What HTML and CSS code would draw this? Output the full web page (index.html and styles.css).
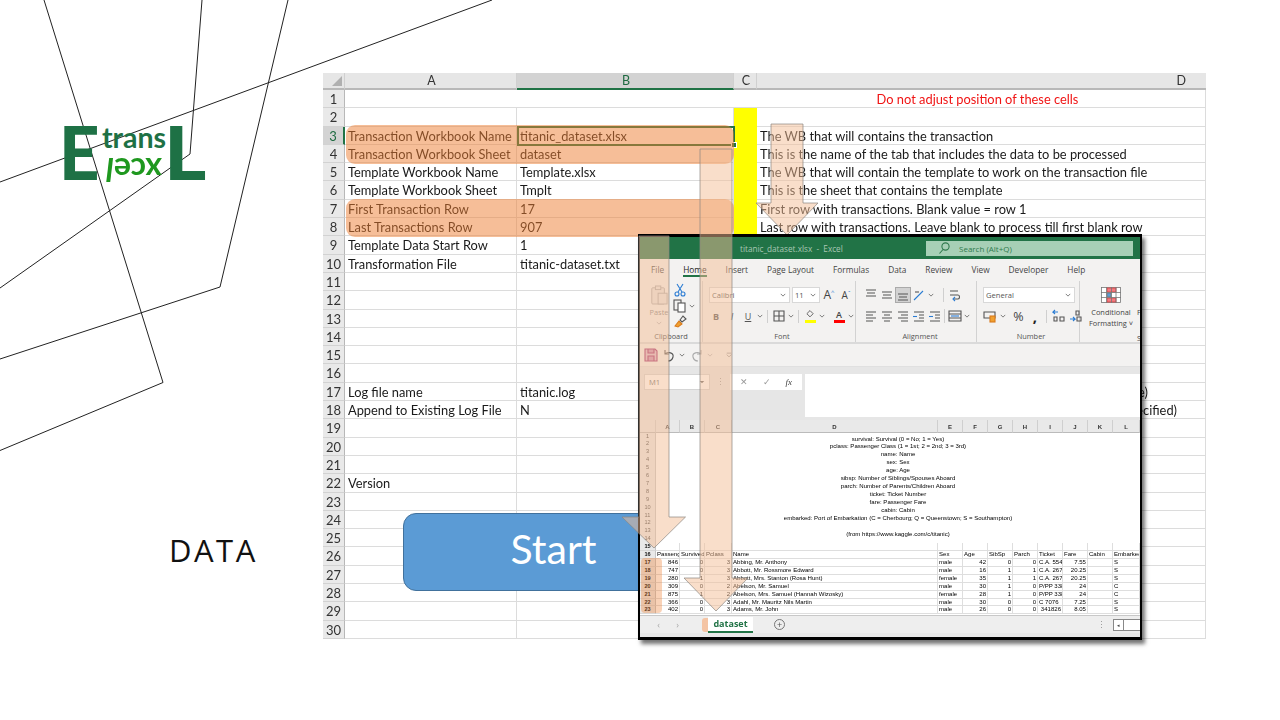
FILE: index.html
```html
<!DOCTYPE html>
<html lang="en">
<head>
<meta charset="utf-8">
<title>ETransL data</title>
<link rel="stylesheet" href="styles.css">
</head>
<body>
<div class="slide">
  <svg class="lines" viewBox="0 0 1280 720">
    <path d="M44 0L163 382.5L0 450.5"/>
    <path d="M202 0L190 154L0 288"/>
    <path d="M288 0L220 287L0 359"/>
    <path d="M0 182L492 0"/>
  </svg>

  <div class="logo">
    <span class="logo-big">E</span>
    <div class="logo-mid">
      <span class="logo-trans">trans</span>
      <span class="logo-xcel">xce<i>l</i></span>
    </div>
    <span class="logo-big logo-l">L</span>
  </div>

  <div class="data-label">DATA</div>

  <div class="sheet">
    <div class="hd corner"></div><div class="hd hd-a">A</div><div class="hd hd-sel">B</div><div class="hd">C</div><div class="hd hd-d">D</div>
    <div class="rh">1</div><div class="c c-wide3"></div><div class="c c-red">Do not adjust position of these cells</div>
    <div class="rh">2</div><div class="c"></div><div class="c"></div><div class="c c-y"></div><div class="c"></div>
    <div class="rh rh-sel">3</div><div class="c">Transaction Workbook Name</div><div class="c">titanic_dataset.xlsx</div><div class="c c-y"></div><div class="c">The WB that will contains the transaction</div>
    <div class="rh">4</div><div class="c">Transaction Workbook Sheet</div><div class="c">dataset</div><div class="c c-y"></div><div class="c">This is the name of the tab that includes the data to be processed</div>
    <div class="rh">5</div><div class="c">Template Workbook Name</div><div class="c">Template.xlsx</div><div class="c c-y"></div><div class="c">The WB that will contain the template to work on the transaction file</div>
    <div class="rh">6</div><div class="c">Template Workbook Sheet</div><div class="c">Tmplt</div><div class="c c-y"></div><div class="c">This is the sheet that contains the template</div>
    <div class="rh">7</div><div class="c">First Transaction Row</div><div class="c">17</div><div class="c c-y"></div><div class="c">First row with transactions. Blank value = row 1</div>
    <div class="rh">8</div><div class="c">Last Transactions Row</div><div class="c">907</div><div class="c c-y"></div><div class="c">Last row with transactions. Leave blank to process till first blank row</div>
    <div class="rh">9</div><div class="c">Template Data Start Row</div><div class="c">1</div><div class="c c-y"></div><div class="c"></div>
    <div class="rh">10</div><div class="c">Transformation File</div><div class="c">titanic-dataset.txt</div><div class="c c-y"></div><div class="c"></div>
    <div class="rh">11</div><div class="c"></div><div class="c"></div><div class="c"></div><div class="c"></div>
    <div class="rh">12</div><div class="c"></div><div class="c"></div><div class="c"></div><div class="c"></div>
    <div class="rh">13</div><div class="c"></div><div class="c"></div><div class="c"></div><div class="c"></div>
    <div class="rh">14</div><div class="c"></div><div class="c"></div><div class="c"></div><div class="c"></div>
    <div class="rh">15</div><div class="c"></div><div class="c"></div><div class="c"></div><div class="c"></div>
    <div class="rh">16</div><div class="c"></div><div class="c"></div><div class="c"></div><div class="c"></div>
    <div class="rh">17</div><div class="c">Log file name</div><div class="c">titanic.log</div><div class="c"></div><div class="c c-end1">e)</div>
    <div class="rh">18</div><div class="c">Append to Existing Log File</div><div class="c">N</div><div class="c"></div><div class="c c-end2">specified)</div>
    <div class="rh">19</div><div class="c"></div><div class="c"></div><div class="c"></div><div class="c"></div>
    <div class="rh">20</div><div class="c"></div><div class="c"></div><div class="c"></div><div class="c"></div>
    <div class="rh">21</div><div class="c"></div><div class="c"></div><div class="c"></div><div class="c"></div>
    <div class="rh">22</div><div class="c">Version</div><div class="c"></div><div class="c"></div><div class="c"></div>
    <div class="rh">23</div><div class="c"></div><div class="c"></div><div class="c"></div><div class="c"></div>
    <div class="rh">24</div><div class="c"></div><div class="c"></div><div class="c"></div><div class="c"></div>
    <div class="rh">25</div><div class="c"></div><div class="c"></div><div class="c"></div><div class="c"></div>
    <div class="rh">26</div><div class="c"></div><div class="c"></div><div class="c"></div><div class="c"></div>
    <div class="rh">27</div><div class="c"></div><div class="c"></div><div class="c"></div><div class="c"></div>
    <div class="rh">28</div><div class="c"></div><div class="c"></div><div class="c"></div><div class="c"></div>
    <div class="rh">29</div><div class="c"></div><div class="c"></div><div class="c"></div><div class="c"></div>
    <div class="rh">30</div><div class="c"></div><div class="c"></div><div class="c"></div><div class="c"></div>
    <div class="sel-cell"><span class="sel-handle"></span></div>
    <div class="mark mark-a"></div>
    <div class="mark mark-b"></div>
  </div>

  <svg class="overlay overlay-back" viewBox="0 0 1280 720">
    <polygon points="771,124 803,124 803,203 818,203 787,235 756,203 771,203"/>
  </svg>

  <div class="start">Start</div>

  <div class="window">
    <div class="win-in">
      <div class="titlebar">
        <span class="title-text">titanic_dataset.xlsx &nbsp;-&nbsp; Excel</span>
        <div class="search">
          <svg class="ic" viewBox="0 0 14 14"><circle cx="8.5" cy="5.500" r="3.6"/><path d="M6 8.500L2.500 12.500"/></svg>
          <span>Search (Alt+Q)</span>
        </div>
      </div>
      <div class="tabs">
        <span>File</span><span class="tab-on">Home</span><span>Insert</span><span>Page Layout</span><span>Formulas</span><span>Data</span><span>Review</span><span>View</span><span>Developer</span><span>Help</span>
      </div>
      <div class="ribbon">
        <div class="grp g-clip">
          <div class="grp-body clip-body">
            <div class="paste">
              <svg class="ic-paste" viewBox="0 0 20 22"><rect x="2" y="3" width="14" height="18" rx="1"/><rect x="6" y="1" width="6" height="4"/><rect x="9" y="9" width="10" height="12"/></svg>
              <span>Paste</span>
              <svg class="chev" viewBox="0 0 8 5"><path d="M1 1l3 3 3-3"/></svg>
            </div>
            <div class="clip-tools">
              <svg class="ic" viewBox="0 0 14 14"><path class="blue" d="M4 1L9 9M10 1L5 9"/><circle class="blue" cx="4" cy="11" r="2"/><circle class="blue" cx="10" cy="11" r="2"/></svg>
              <div class="copy-row"><svg class="ic" viewBox="0 0 14 14"><rect x="1" y="1" width="7" height="10"/><rect x="5" y="4" width="7" height="9" fill="#fff"/></svg><svg class="chev" viewBox="0 0 8 5"><path d="M1 1l3 3 3-3"/></svg></div>
              <svg class="ic" viewBox="0 0 14 14"><path class="orange" d="M2 12L6 7L9 10L5 13Z"/><path d="M7 6L10 2L13 5L9 8Z"/></svg>
            </div>
          </div>
          <div class="grp-label">Clipboard</div>
        </div>
        <div class="grp g-font">
          <div class="grp-body">
            <div class="rrow">
              <div class="box box-font">Calibri<svg class="chev" viewBox="0 0 8 5"><path d="M1 1l3 3 3-3"/></svg></div>
              <div class="box box-size">11<svg class="chev" viewBox="0 0 8 5"><path d="M1 1l3 3 3-3"/></svg></div>
              <span class="big-a">A<sup>^</sup></span><span class="big-a small-a">A<sup>ˇ</sup></span>
            </div>
            <div class="rrow font-row2">
              <b class="fmt">B</b><i class="fmt">I</i><u class="fmt">U</u><svg class="chev" viewBox="0 0 8 5"><path d="M1 1l3 3 3-3"/></svg>
              <i class="sep"></i>
              <svg class="ic" viewBox="0 0 14 14"><path d="M2 2h10v10H2zM7 2v10M2 7h10"/></svg><svg class="chev" viewBox="0 0 8 5"><path d="M1 1l3 3 3-3"/></svg>
              <i class="sep"></i>
              <span class="color"><svg class="ic" viewBox="0 0 14 14"><path d="M3 6L7 2L11 6L7 10Z"/></svg><i class="bar bar-y"></i></span><svg class="chev" viewBox="0 0 8 5"><path d="M1 1l3 3 3-3"/></svg>
              <span class="color color-next"><span class="color-a">A</span><i class="bar bar-r"></i></span><svg class="chev" viewBox="0 0 8 5"><path d="M1 1l3 3 3-3"/></svg>
            </div>
          </div>
          <div class="grp-label">Font</div>
        </div>
        <div class="grp g-align">
          <div class="grp-body">
            <div class="rrow align-row">
              <svg class="ic" viewBox="0 0 14 14"><path d="M2 2h10M3 5h8M2 8h10"/></svg>
              <svg class="ic" viewBox="0 0 14 14"><path d="M2 4h10M3 7h8M2 10h10"/></svg>
              <svg class="ic ic-on" viewBox="0 0 14 14"><path d="M2 6h10M3 9h8M2 12h10"/></svg>
              <svg class="ic" viewBox="0 0 14 14"><path class="blue" d="M2 12L11 3"/><path d="M3 4h4"/></svg><svg class="chev" viewBox="0 0 8 5"><path d="M1 1l3 3 3-3"/></svg>
              <div class="al-end">
                <svg class="ic" viewBox="0 0 14 14"><path d="M3 3h8M3 7h8c2 0 2 4 0 4H7"/><path class="blue" d="M8 9l-2 2 2 2"/></svg>
              </div>
            </div>
            <div class="rrow align-row">
              <svg class="ic" viewBox="0 0 14 14"><path d="M2 3h10M2 6h7M2 9h10M2 12h7"/></svg>
              <svg class="ic" viewBox="0 0 14 14"><path d="M2 3h10M4 6h6M2 9h10M4 12h6"/></svg>
              <svg class="ic" viewBox="0 0 14 14"><path d="M2 3h10M5 6h7M2 9h10M5 12h7"/></svg>
              <svg class="ic" viewBox="0 0 14 14"><path d="M2 3h10M7 6h5M7 9h5M2 12h10"/><path class="blue" d="M5 7.500H1"/></svg>
              <svg class="ic" viewBox="0 0 14 14"><path d="M2 3h10M7 6h5M7 9h5M2 12h10"/><path class="blue" d="M1 7.500h4"/></svg>
              <div class="al-end">
                <svg class="ic" viewBox="0 0 14 14"><path d="M1 2h12v10H1zM1 5h12M1 9h12"/><path class="blue" d="M3 7h8"/></svg><svg class="chev" viewBox="0 0 8 5"><path d="M1 1l3 3 3-3"/></svg>
              </div>
            </div>
          </div>
          <div class="grp-label">Alignment</div>
        </div>
        <div class="grp g-num">
          <div class="grp-body">
            <div class="rrow">
              <div class="box box-gen">General<svg class="chev" viewBox="0 0 8 5"><path d="M1 1l3 3 3-3"/></svg></div>
            </div>
            <div class="rrow num-row">
              <svg class="ic" viewBox="0 0 14 14"><path d="M1 3h11v6H1z"/><rect class="orange" x="7" y="7" width="5" height="6"/></svg><svg class="chev" viewBox="0 0 8 5"><path d="M1 1l3 3 3-3"/></svg>
              <span class="pct">%</span><b class="comma">,</b>
              <i class="sep"></i>
              <svg class="ic" viewBox="0 0 14 14"><path class="blue" d="M6 3H1l2-2M1 3l2 2"/><path d="M2 8h3v4H2zM8 8h4v4H8z"/></svg>
              <svg class="ic" viewBox="0 0 14 14"><path class="blue" d="M1 10h5l-2-2M6 10l-2 2"/><path d="M7 2h3v4H7zM8 8h4v4H8z"/></svg>
            </div>
          </div>
          <div class="grp-label">Number</div>
        </div>
        <div class="grp g-styles">
          <div class="cf">
            <svg class="ic-cf" viewBox="0 0 20 16"><rect x=".5" y=".5" width="19" height="15" fill="#fff"/><rect class="red" x="6" y="1" width="9" height="4"/><rect x="6" y="6" width="4" height="4" fill="#5b9bd5"/><rect class="red" x="6" y="11" width="9" height="4"/><path d="M5.500 0v16M10.500 0v16M15 0v16M0 5.500h20M0 10.500h20"/></svg>
            <span>Conditional</span>
            <span>Formatting ˅</span>
          </div>
          <span class="cf-next">F</span>
          <span class="cf-next cf-s">S</span>
        </div>
      </div>
      <div class="qat">
        <svg class="ic ic-save" viewBox="0 0 14 14"><path d="M1 1h10l2 2v10H1z"/><path d="M4 1v4h6V1M4 13V8h6v5"/></svg>
        <svg class="ic" viewBox="0 0 14 14"><path d="M3 2v4h4M3 6c3-3 9-1 8 3s-4 4-5 4"/></svg><svg class="chev" viewBox="0 0 8 5"><path d="M1 1l3 3 3-3"/></svg>
        <svg class="ic ic-dim" viewBox="0 0 14 14"><path d="M11 2v4H7M11 6C8 3 2 5 3 9s4 4 5 4"/></svg><svg class="chev chev-dim" viewBox="0 0 8 5"><path d="M1 1l3 3 3-3"/></svg>
        <svg class="chev qat-more" viewBox="0 0 8 7"><path d="M1 1h6M1 3l3 3 3-3"/></svg>
      </div>
      <div class="fbar">
        <div class="namebox"><span>M1</span><svg class="chev" viewBox="0 0 8 5"><path d="M1 1h6L4 4z"/></svg></div>
        <span class="vdots">⋮</span>
        <div class="fbtns"><span>✕</span><span>✓</span><i>fx</i></div>
        <div class="fbox"></div>
      </div>
      <div class="mini">
        <div class="mh mh-corner"></div><div class="mh">A</div><div class="mh">B</div><div class="mh">C</div><div class="mh">D</div><div class="mh">E</div><div class="mh">F</div><div class="mh">G</div><div class="mh">H</div><div class="mh">I</div><div class="mh">J</div><div class="mh">K</div><div class="mh">L</div>
        <div class="mr">1</div>
        <div class="notes">
          <div>survival: Survival (0 = No; 1 = Yes)</div>
          <div>pclass: Passenger Class (1 = 1st; 2 = 2nd; 3 = 3rd)</div>
          <div>name: Name</div>
          <div>sex: Sex</div>
          <div>age: Age</div>
          <div>sibsp: Number of Siblings/Spouses Aboard</div>
          <div>parch: Number of Parents/Children Aboard</div>
          <div>ticket: Ticket Number</div>
          <div>fare: Passenger Fare</div>
          <div>cabin: Cabin</div>
          <div>embarked: Port of Embarkation (C = Cherbourg; Q = Queenstown; S = Southampton)</div>
          <div>&nbsp;</div>
          <div>(from https://www.kaggle.com/c/titanic)</div>
        </div>
        <div class="mr">2</div><div class="mr">3</div><div class="mr">4</div><div class="mr">5</div><div class="mr">6</div><div class="mr">7</div><div class="mr">8</div><div class="mr">9</div><div class="mr">10</div><div class="mr">11</div><div class="mr">12</div><div class="mr">13</div><div class="mr">14</div>
        <div class="mr mr-b">15</div><div class="m"></div><div class="m"></div><div class="m"></div><div class="m"></div><div class="m"></div><div class="m"></div><div class="m"></div><div class="m"></div><div class="m"></div><div class="m"></div><div class="m"></div><div class="m"></div>
        <div class="mr mr-b">16</div><div class="m">Passenger</div><div class="m">Survived</div><div class="m">Pclass</div><div class="m">Name</div><div class="m">Sex</div><div class="m">Age</div><div class="m">SibSp</div><div class="m">Parch</div><div class="m">Ticket</div><div class="m">Fare</div><div class="m">Cabin</div><div class="m">Embarked</div>
        <div class="mr mr-b">17</div><div class="m n">846</div><div class="m n">0</div><div class="m n">3</div><div class="m">Abbing, Mr. Anthony</div><div class="m">male</div><div class="m n">42</div><div class="m n">0</div><div class="m n">0</div><div class="m">C.A. 5547</div><div class="m n">7.55</div><div class="m"></div><div class="m">S</div>
        <div class="mr mr-b">18</div><div class="m n">747</div><div class="m n">0</div><div class="m n">3</div><div class="m">Abbott, Mr. Rossmore Edward</div><div class="m">male</div><div class="m n">16</div><div class="m n">1</div><div class="m n">1</div><div class="m">C.A. 2673</div><div class="m n">20.25</div><div class="m"></div><div class="m">S</div>
        <div class="mr mr-b">19</div><div class="m n">280</div><div class="m n">1</div><div class="m n">3</div><div class="m">Abbott, Mrs. Stanton (Rosa Hunt)</div><div class="m">female</div><div class="m n">35</div><div class="m n">1</div><div class="m n">1</div><div class="m">C.A. 2673</div><div class="m n">20.25</div><div class="m"></div><div class="m">S</div>
        <div class="mr mr-b">20</div><div class="m n">309</div><div class="m n">0</div><div class="m n">2</div><div class="m">Abelson, Mr. Samuel</div><div class="m">male</div><div class="m n">30</div><div class="m n">1</div><div class="m n">0</div><div class="m">P/PP 3381</div><div class="m n">24</div><div class="m"></div><div class="m">C</div>
        <div class="mr mr-b">21</div><div class="m n">875</div><div class="m n">1</div><div class="m n">2</div><div class="m">Abelson, Mrs. Samuel (Hannah Wizosky)</div><div class="m">female</div><div class="m n">28</div><div class="m n">1</div><div class="m n">0</div><div class="m">P/PP 3381</div><div class="m n">24</div><div class="m"></div><div class="m">C</div>
        <div class="mr mr-b">22</div><div class="m n">366</div><div class="m n">0</div><div class="m n">3</div><div class="m">Adahl, Mr. Mauritz Nils Martin</div><div class="m">male</div><div class="m n">30</div><div class="m n">0</div><div class="m n">0</div><div class="m">C 7076</div><div class="m n">7.25</div><div class="m"></div><div class="m">S</div>
        <div class="mr mr-b">23</div><div class="m n">402</div><div class="m n">0</div><div class="m n">3</div><div class="m">Adams, Mr. John</div><div class="m">male</div><div class="m n">26</div><div class="m n">0</div><div class="m n">0</div><div class="m n">341826</div><div class="m n">8.05</div><div class="m"></div><div class="m">S</div>
        <div class="mark mark-rows"></div>
      </div>
      <div class="tabbar">
        <span class="nav">‹</span><span class="nav">›</span>
        <span class="tab-mark"></span><span class="sheet-tab">dataset</span>
        <span class="add">+</span>
        <span class="tb-dots">⋮</span>
        <span class="hscroll"><i>◂</i></span>
      </div>
      <div class="statusbar"></div>
    </div>
  </div>

  <svg class="overlay overlay-front" viewBox="0 0 1280 720">
    <polygon points="639,236 669,236 669,517 685.500,517 654,548 622,517 639,517"/>
    <polygon points="700,149 732,149 732,578 748,578 716,611 684,578 700,578"/>
  </svg>
</div>
</body>
</html>
```
FILE: styles.css
```css
* { box-sizing: border-box; }
html, body { margin: 0; padding: 0; background: #fff; }
.slide { position: relative; width: 1280px; height: 720px; overflow: hidden; background: #fff; font-family: Lato, "Liberation Sans", sans-serif; }

.lines { position: absolute; left: 0; top: 0; width: 1280px; height: 720px; }
.lines path { fill: none; stroke: #222; stroke-width: 1; }

.logo { position: absolute; left: 64px; top: 128px; display: flex; height: 54px; color: #1e7145; }
.logo-big { display: block; flex: none; width: 33px; height: 51px; margin-left: -5px; font: 900 75px/46px Lato, sans-serif; transform: scaleX(.94); transform-origin: 0 50%; }
.logo-l { margin-left: -7px; transform: scaleX(1.08); }
.logo-mid { width: 79px; flex: none; padding-left: 10px; display: flex; flex-direction: column; }
.logo-trans { font: 700 28.500px/18px Lato, sans-serif; height: 22px; }
.logo-xcel { font: 700 32px/24px Lato, sans-serif; color: #1f981f; transform: rotate(180deg); width: 60px; margin-top: 8px; }

.data-label { position: absolute; left: 169px; top: 530px; font: 400 31px/40px "Open Sans", sans-serif; letter-spacing: 2.5px; color: #111; }

.sheet { position: absolute; left: 323px; top: 73px; width: 883px; display: grid; grid-template-columns: 22px 172px 217px 23px 449px; grid-template-rows: 17px repeat(30, 18.3px); font-size: 12.85px; color: #1a1a1a; background: #fff; filter: blur(.3px); }
.hd { background: #e6e6e6; border-right: 1px solid #d0d0d0; border-bottom: 2px solid #b8b8b8; text-align: center; line-height: 16px; font-size: 12.5px; color: #333; padding-left: 2px; }
.hd-d { text-align: right; padding-right: 20px; border-right: 0; }
.hd-sel { background: #d3d3d3; color: #1f6b41; border-bottom-color: #217346; }
.corner { position: relative; }
.corner::after { content: ""; position: absolute; right: 2px; bottom: 2px; border: 5px solid transparent; border-right-color: #b0b0b0; border-bottom-color: #b0b0b0; }
.rh { background: #e9e9e9; border-right: 1px solid #b8b8b8; border-bottom: 1px solid #d2d2d2; text-align: center; line-height: 18px; font-size: 13px; color: #333; }
.rh-sel { background: #d3d3d3; color: #1f6b41; border-right: 2px solid #217346; }
.c { border-right: 1px solid #dcdcdc; border-bottom: 1px solid #dcdcdc; padding-left: 3px; line-height: 18px; white-space: nowrap; overflow: hidden; }
.c-wide3 { grid-column: span 3; border-right: 0; }
.c-red { color: #f01414; text-align: center; padding-right: 10px; }
.c-y { background: #ff0; border-color: #ff0; }
.c-end1, .c-end2 { text-align: right; }
.c-end1 { padding-right: 57px; }
.c-end2 { padding-right: 28px; }

.sel-cell { position: absolute; left: 194px; top: 53px; width: 218px; height: 20px; border: 2px solid #217346; }
.sel-handle { position: absolute; right: -4px; bottom: -4px; width: 6px; height: 6px; background: #217346; border: 1px solid #fff; }
.mark { position: absolute; background: rgba(237, 125, 49, .5); border-radius: 9px; }
.mark-a { left: 23px; top: 52px; width: 388px; height: 39px; }
.mark-b { left: 23px; top: 126px; width: 388px; height: 38px; }

.overlay { position: absolute; left: 0; top: 0; width: 1280px; height: 720px; pointer-events: none; }
.overlay polygon { fill: rgba(243, 190, 150, .5); stroke: rgba(140, 135, 130, .7); stroke-width: 1; }

.start { position: absolute; left: 403px; top: 513px; width: 301px; height: 78px; background: #5b9bd5; border: 1px solid #41719c; border-radius: 13px; color: #fff; font: 400 41px/70px Lato, sans-serif; text-align: center; }

.window { position: absolute; left: 638px; top: 234px; width: 504px; height: 406px; border: solid #000; border-width: 3px 2px; box-shadow: 3px 4px 4px rgba(0, 0, 0, .55); background: #f3f2f1; }
.win-in { display: flex; flex-direction: column; width: 500px; height: 400px; overflow: hidden; filter: blur(.35px); font-family: "Open Sans", sans-serif; color: #444; }

.ic { width: 14px; height: 14px; flex: none; fill: none; stroke: #555; stroke-width: 1.1; }
.ic .blue { stroke: #2b7cd3; }
.ic .orange { stroke: #d97a1c; fill: #f0a030; }
.chev { width: 6px; height: 4px; flex: none; fill: none; stroke: #555; stroke-width: 1; }

.titlebar { flex: none; height: 22px; background: #217346; display: flex; align-items: center; font-size: 8.2px; white-space: nowrap; }
.title-text { width: 286px; padding-left: 100px; flex: none; color: #a9c7b4; }
.search { width: 207px; height: 15px; background: #a7d0b6; display: flex; align-items: center; gap: 8px; padding-left: 11px; color: #2f7a4d; font-size: 8px; }
.search .ic { stroke: #2f7a4d; }

.tabs { flex: none; height: 22px; display: flex; gap: 19px; padding-left: 11px; padding-bottom: 2px; align-items: center; font-size: 8.3px; background: #f3f2f1; color: #444; white-space: nowrap; }
.tab-on { position: relative; color: #222; }
.tab-on::after { content: ""; position: absolute; left: 0; right: 0; bottom: -2px; height: 2px; background: #217346; }

.ribbon { flex: none; height: 63px; display: flex; background: #f3f2f1; border-bottom: 2px solid #dadada; }
.grp { display: flex; flex-direction: column; border-right: 1px solid #d2d2d2; flex: none; position: relative; }
.grp-body { height: 50px; padding-top: 6px; display: flex; flex-direction: column; gap: 5px; }
.grp-label { text-align: center; font-size: 7.4px; line-height: 11px; color: #555; white-space: nowrap; }
.g-clip { width: 63px; }
.g-font { width: 153px; padding-left: 6px; }
.g-align { width: 121px; padding-left: 8px; }
.g-num { width: 103px; padding-left: 6px; }
.g-styles { width: 60px; border-right: 0; overflow: hidden; }
.clip-body { flex-direction: row; gap: 2px; padding-left: 7px; padding-top: 2px; }
.paste { width: 24px; flex: none; display: flex; flex-direction: column; align-items: center; font-size: 7.4px; line-height: 11px; color: #888; padding-top: 2px; }
.paste .chev { margin-top: 3px; stroke: #aaa; }
.ic-paste { width: 18px; height: 20px; margin-bottom: 2px; fill: #e8e6e4; stroke: #aaa; }
.clip-tools { display: flex; flex-direction: column; gap: 1.5px; }
.copy-row { display: flex; align-items: center; gap: 2px; }
.rrow { display: flex; align-items: center; height: 16px; gap: 2px; }
.box { background: #fff; border: 1px solid #d8d8d8; height: 16px; display: flex; align-items: center; justify-content: space-between; padding: 0 3px 0 2px; font-size: 7.6px; color: #555; flex: none; }
.box-font { width: 81px; }
.box-size { width: 28px; }
.box-gen { width: 92px; }
.big-a { font-size: 12px; width: 14px; flex: none; text-align: center; margin-left: 0; line-height: 16px; color: #444; white-space: nowrap; }
.small-a { font-size: 10px; margin-left: 1px; }
.big-a sup { font-size: 6px; color: #2b7cd3; line-height: 0; }
.fmt { width: 14px; flex: none; text-align: center; font-size: 9px; color: #555; }
.sep { width: 1px; height: 13px; background: #cfcfcf; margin: 0 2px; flex: none; }
.color { display: flex; flex-direction: column; align-items: center; flex: none; width: 14px; height: 15px; }
.color-next { margin-left: 5px; }
.color .ic { height: 11px; }
.color-a { font-size: 9px; line-height: 11px; font-weight: 600; }
.bar { width: 11px; height: 3px; display: block; flex: none; }
.bar-y { background: #ff0; }
.bar-r { background: #f00; }
.align-row { gap: 2px; }
.al-end { margin-left: auto; width: 33px; height: 14px; flex: none; padding-left: 3px; display: flex; align-items: center; gap: 2px; border-left: 1px solid #cfcfcf; }
.ic-on { background: #d2d2d2; outline: 1px solid #aaa; }
.num-row { gap: 3px; }
.pct { width: 13px; flex: none; text-align: center; font-size: 12.5px; margin-left: 3px; color: #444; }
.comma { width: 8px; flex: none; text-align: center; font-size: 15px; line-height: 10px; margin: 0 2px 0 3px; color: #222; }
.cf { display: flex; flex-direction: column; align-items: center; margin-left: 5px; padding-top: 6px; width: 52px; font-size: 7.4px; line-height: 11px; color: #444; white-space: nowrap; }
.ic-cf { width: 20px; height: 16px; margin-bottom: 4px; fill: none; stroke: #777; stroke-width: .8; }
.ic-cf .red { fill: #f47a80; stroke: #d04040; }
.cf-next { position: absolute; left: 57px; top: 26px; font-size: 7.4px; }
.cf-s { top: 52px; }

.qat { flex: none; height: 23px; display: flex; align-items: center; gap: 3px; padding-left: 4px; background: #f3f2f1; border-bottom: 1px solid #e0e0e0; }
.ic-save { stroke: #a02c6c; fill: rgba(170, 50, 120, .3); margin-right: 1px; }
.ic-dim { stroke: #aaa; margin-left: 2px; }
.chev-dim { stroke: #aaa; }
.qat-more { margin-left: 10px; height: 6px; stroke: #888; }

.fbar { flex: none; height: 53px; background: #e6e6e6; display: flex; align-items: flex-start; padding-top: 7px; }
.namebox { width: 66px; height: 16px; margin-left: 4px; background: #fff; border: 1px solid #d5d5d5; display: flex; justify-content: space-between; align-items: center; padding: 0 4px; font-size: 7.6px; color: #666; flex: none; }
.namebox .chev { fill: #666; stroke: none; }
.vdots { width: 20px; flex: none; font-size: 9px; text-align: center; line-height: 16px; color: #999; }
.fbtns { width: 72px; height: 16px; flex: none; display: flex; justify-content: space-between; padding: 0 10px; background: #fff; font-size: 9px; line-height: 16px; color: #999; }
.fbtns i { color: #444; font-family: "Liberation Serif", serif; }
.fbox { flex: 1; height: 43px; background: #fff; margin-left: 3px; }

.mini { position: relative; flex: none; height: 195px; background: #fff; display: grid; grid-template-columns: 16px 24px 25px 27px 206px repeat(3, 25px) 25px 25px 25px 25px 27px; grid-template-rows: 12.5px repeat(23, 7.92px); font: 6.05px/7.92px "Liberation Sans", sans-serif; color: #000; }
.mh { background: #e9e9e9; border-right: 1px solid #cfcfcf; border-bottom: 1px solid #bbb; text-align: center; font-size: 6px; line-height: 14px; font-weight: 700; color: #333; overflow: hidden; }
.mr { background: #e9e9e9; border-right: 1px solid #c5c5c5; text-align: center; font-size: 5.6px; color: #444; }
.mr-b { font-weight: 700; color: #111; border-bottom: 1px solid #d8d8d8; }
.notes { grid-row: 2 / span 14; grid-column: 2 / -1; text-align: center; padding-top: 3px; }
.m { border-right: 1px solid #dedede; border-bottom: 1px solid #dedede; padding: 0 1px; white-space: nowrap; overflow: hidden; }
.n { text-align: right; }
.mark-rows { left: 1px; top: 138px; width: 21px; height: 55px; border-radius: 4px; background: rgba(237, 125, 49, .35); }

.tabbar { flex: none; height: 18px; background: #eeeeee; border-top: 1px solid #c8c8c8; display: flex; align-items: center; font-size: 9px; color: #aaa; }
.nav { width: 19px; text-align: center; }
.nav:first-child { margin-left: 9px; }
.tab-mark { width: 6px; height: 14px; margin-left: 15px; background: #f4c4a4; border-radius: 3px 0 0 3px; }
.sheet-tab { width: 45px; height: 16px; background: #fff; border-bottom: 2px solid #217346; color: #217346; font: 700 9px/14px "Open Sans", sans-serif; text-align: center; }
.add { width: 11px; height: 11px; margin-left: 21px; border: 1px solid #777; border-radius: 50%; font-size: 9px; line-height: 9px; text-align: center; color: #555; }
.tb-dots { margin-left: 312px; color: #999; }
.hscroll { margin-left: 7px; flex: 1; height: 12px; background: #fff; border: 1px solid #888; border-right: 0; }
.hscroll i { display: block; width: 10px; height: 10px; border-right: 1px solid #888; font-size: 5px; line-height: 10px; text-align: center; font-style: normal; color: #444; }
.statusbar { flex: 1; background: #e8e8e8; }
```
